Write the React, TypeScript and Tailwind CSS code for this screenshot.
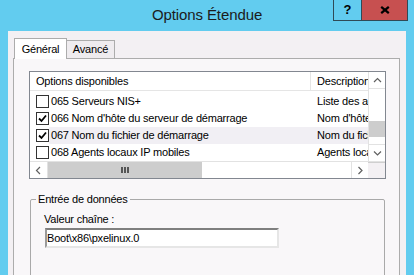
import React from "react";

const Check = () => (
  <svg width="11" height="11" viewBox="0 0 11 11">
    <path d="M2 5.5 L4.5 8 L9 2.5" fill="none" stroke="#000" strokeWidth="1.8" />
  </svg>
);

const Chevron = ({ dir }: { dir: "up" | "down" | "left" | "right" }) => {
  const d: Record<string, string> = {
    up: "M1 5 L4.5 1.5 L8 5",
    down: "M1 1.5 L4.5 5 L8 1.5",
    left: "M5 1 L1.5 4.5 L5 8",
    right: "M1.5 1 L5 4.5 L1.5 8",
  };
  const vertical = dir === "up" || dir === "down";
  return (
    <svg width={vertical ? 9 : 7} height={vertical ? 7 : 9} viewBox={vertical ? "0 0 9 7" : "0 0 7 9"}>
      <path d={d[dir]} fill="none" stroke="#606060" strokeWidth="1.2" />
    </svg>
  );
};

type Row = { code: string; checked: boolean; desc: string; hover?: boolean };

const rows: Row[] = [
  { code: "065 Serveurs NIS+", checked: false, desc: "Liste des adresses des serveurs NIS+" },
  { code: "066 Nom d'hôte du serveur de démarrage", checked: true, desc: "Nom d'hôte du serveur TFTP" },
  { code: "067 Nom du fichier de démarrage", checked: true, desc: "Nom du fichier de démarrage", hover: true },
  { code: "068 Agents locaux IP mobiles", checked: false, desc: "Agents locaux IP mobiles" },
];

export default function App() {
  return (
    <div className="w-[414px] h-[275px] overflow-hidden bg-[#62ccef] flex flex-col font-['Liberation_Sans',Arial,sans-serif] text-[11px] tracking-[-0.2px] text-black">
      {/* Title bar */}
      <div className="relative h-[31px] shrink-0 flex items-center justify-center">
        <span className="text-[15px] tracking-[-0.1px] text-[#1b1b1b]">Options Étendue</span>
        <div className="absolute top-0 right-[6px] flex h-[21px] border border-t-0 border-[#2f4a56]">
          <div className="w-[28px] h-full flex items-center justify-center border-r border-[#2f4a56] font-bold text-[13px] tracking-normal">?</div>
          <div className="w-[45px] h-full bg-[#c75050] flex items-center justify-center">
            <svg width="10" height="8" viewBox="0 0 10 8">
              <path d="M1.2 0.8 L8.8 7.2 M8.8 0.8 L1.2 7.2" stroke="#000" strokeWidth="2.2" />
            </svg>
          </div>
        </div>
      </div>

      {/* Dialog body */}
      <div className="mx-[8px] flex-1 bg-[#f3f0f3] pt-[7px] pl-[5px] pr-[6px] flex flex-col">
        {/* Tabs */}
        <div className="flex items-end h-[20px] pl-[1px] relative z-10">
          <div className="h-[21px] -mb-px w-[53px] bg-white border border-b-0 border-[#acacac] flex items-center justify-center">
            Général
          </div>
          <div className="h-[18px] w-[48px] bg-[#efecef] border-t border-r border-[#acacac] flex items-center justify-center">
            Avancé
          </div>
        </div>

        {/* Tab pane */}
        <div className="flex-1 border border-[#acacac] bg-[#f9f7f9] pt-[12px] pl-[15px] flex flex-col">
          {/* List view */}
          <div className="w-[357px] h-[108px] shrink-0 border border-[#828790] bg-white flex flex-col">
            <div className="flex h-[89px]">
              <div className="flex-1 flex flex-col min-w-0">
                <div className="h-[19px] shrink-0 flex border-b border-[#e5e5e5]">
                  <div className="w-[281px] pl-[6px] flex items-center border-r border-[#e5e5e5]">Options disponibles</div>
                  <div className="flex-1 pl-[6px] flex items-center overflow-hidden whitespace-nowrap">Description</div>
                </div>
                <div className="pt-[2px] flex flex-col">
                  {rows.map((r) => (
                    <div key={r.code} className="h-[17px] flex items-center pl-[6px]">
                      <div className="w-[13px] h-[13px] shrink-0 border border-[#333] bg-white flex items-center justify-center">
                        {r.checked && <Check />}
                      </div>
                      <div className={`flex-1 h-full flex items-center min-w-0 ${r.hover ? "bg-[#f1eff4]" : ""}`}>
                        <span className="w-[262px] shrink-0 pl-[2px] whitespace-nowrap overflow-hidden">{r.code}</span>
                        <span className="flex-1 pl-[6px] whitespace-nowrap overflow-hidden">{r.desc}</span>
                      </div>
                    </div>
                  ))}
                </div>
              </div>
              {/* Vertical scrollbar */}
              <div className="w-[17px] shrink-0 flex flex-col border-l border-[#e2e2e2]">
                <div className="h-[17px] shrink-0 flex items-center justify-center border-b border-[#e2e2e2]">
                  <Chevron dir="up" />
                </div>
                <div className="flex-1 relative">
                  <div className="mt-[32px] h-[16px] bg-[#cdcdcd]" />
                </div>
                <div className="h-[17px] shrink-0 flex items-center justify-center border-t border-[#e2e2e2]">
                  <Chevron dir="down" />
                </div>
              </div>
            </div>
            {/* Horizontal scrollbar */}
            <div className="flex h-[17px] border-t border-[#e2e2e2]">
              <div className="w-[18px] shrink-0 flex items-center justify-center border-r border-[#e2e2e2]">
                <Chevron dir="left" />
              </div>
              <div className="w-[154px] shrink-0 bg-[#cdcdcd] flex items-center justify-center gap-[1px]">
                <div className="w-[2px] h-[6px] bg-[#555]" />
                <div className="w-[2px] h-[6px] bg-[#555]" />
                <div className="w-[2px] h-[6px] bg-[#555]" />
              </div>
              <div className="flex-1" />
              <div className="w-[17px] shrink-0 flex items-center justify-center border-l border-[#e2e2e2]">
                <Chevron dir="right" />
              </div>
              <div className="w-[17px] shrink-0 bg-[#f3f0f3] border-t border-[#cfcfcf]" />
            </div>
          </div>

          {/* Group box */}
          <fieldset className="mt-[13px] ml-[1px] w-[355px] h-[120px] shrink-0 border border-[#a9a9a9] rounded-[2px] pl-[5px]">
            <legend className="px-[2px] leading-[14px]">Entrée de données</legend>
            <div className="pl-[8px] pt-[6px] flex flex-col">
              <span className="leading-[14px]">Valeur chaîne :</span>
              <div className="mt-[2px] ml-[1px] w-[234px] h-[20px] bg-white border-2 border-t-[#7f7f7f] border-l-[#9a9a9a] border-b-[#e6e6e6] border-r-[#e6e6e6] flex items-center whitespace-nowrap">
                Boot\x86\pxelinux.0
              </div>
            </div>
          </fieldset>
        </div>
      </div>
    </div>
  );
}
